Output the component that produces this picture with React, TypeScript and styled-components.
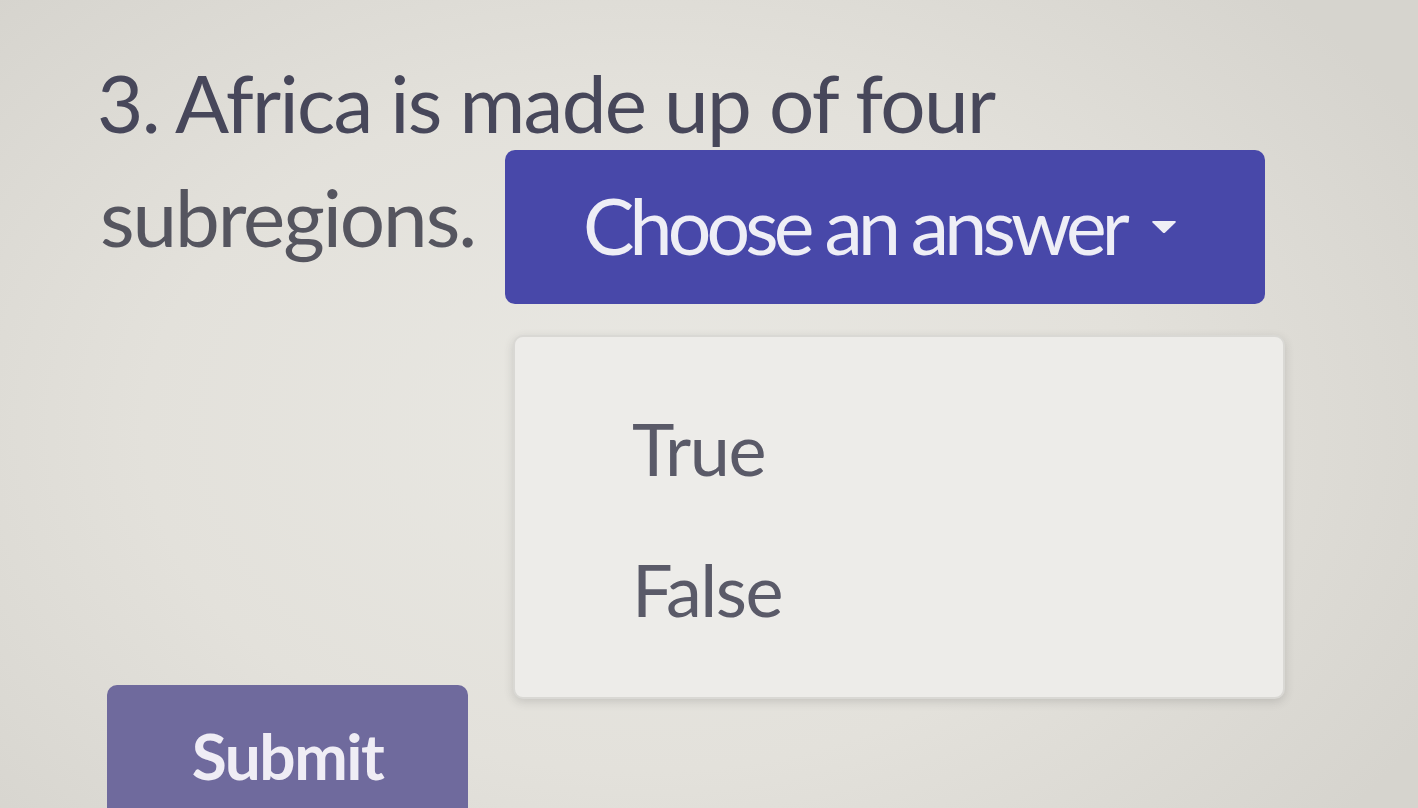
import React from "react";
import styled, { createGlobalStyle } from "styled-components";

const GlobalStyle = createGlobalStyle`
  html, body {
    margin: 0;
    padding: 0;
  }
  body {
    width: 1418px;
    height: 808px;
    overflow: hidden;
    background: radial-gradient(ellipse 900px 620px at 640px 430px, #e9e8e3 0%, #e3e1db 55%, #d6d4ce 100%);
    font-family: Lato, "Open Sans", sans-serif;
  }
`;

const Page = styled.main`
  display: flex;
  flex-direction: column;
  padding: 46px 0 0 97px;
  box-sizing: border-box;
  height: 808px;
`;

const QuestionLine = styled.div`
  font-size: 80px;
  line-height: 112px;
  color: #47475a;
  letter-spacing: -1.7px;
  white-space: nowrap;
`;

const AnswerRow = styled.div`
  display: flex;
  align-items: flex-start;
  gap: 30px;
`;

const QuestionTail = styled(QuestionLine)`
  margin-top: 2px;
  padding-left: 3px;
  color: #55555f;
  letter-spacing: -2.1px;
`;

const SelectWrap = styled.div`
  position: relative;
  margin-top: -8px;
`;

const SelectButton = styled.button`
  display: flex;
  align-items: center;
  gap: 26px;
  width: 760px;
  height: 154px;
  padding: 0 0 4px 78px;
  box-sizing: border-box;
  border: none;
  border-radius: 10px;
  background: #4848a9;
  color: #eeeef6;
  font-family: Lato, "Open Sans", sans-serif;
  font-size: 77px;
  letter-spacing: -4.85px;
  cursor: pointer;
`;

const Caret = styled.svg`
  width: 26px;
  height: 14px;
  margin-top: 4px;
`;

const Menu = styled.ul`
  position: absolute;
  top: 185px;
  left: 8px;
  width: 772px;
  height: 364px;
  margin: 0;
  padding: 41px 0;
  box-sizing: border-box;
  list-style: none;
  background: #edece9;
  border: 2px solid #d9d8d4;
  border-radius: 10px;
  box-shadow: 0 3px 10px rgba(60, 60, 60, 0.18);
`;

const MenuItem = styled.li`
  padding-left: 117px;
  font-size: 72px;
  line-height: 141px;
  color: #5a5a68;
  letter-spacing: -1.5px;
`;

const SubmitButton = styled.button`
  align-self: flex-start;
  flex-shrink: 0;
  margin: 381px 0 0 10px;
  width: 361px;
  height: 170px;
  padding: 0 0 30px;
  border: none;
  border-radius: 10px;
  background: #6f6a9d;
  color: #efedf5;
  font-family: Lato, "Open Sans", sans-serif;
  font-size: 64px;
  font-weight: 700;
  letter-spacing: -1.5px;
  cursor: pointer;
`;

export default function App() {
  return (
    <>
      <GlobalStyle />
      <Page>
        <QuestionLine>3. Africa is made up of four</QuestionLine>
        <AnswerRow>
          <QuestionTail>subregions.</QuestionTail>
          <SelectWrap>
            <SelectButton>
              Choose an answer
              <Caret viewBox="0 0 26 14">
                <path d="M2 1 L24 1 Q25.5 1 24.5 2.5 L14.2 12.6 Q13 13.6 11.8 12.6 L1.5 2.5 Q0.5 1 2 1 Z" fill="#eeeef6" />
              </Caret>
            </SelectButton>
            <Menu>
              <MenuItem>True</MenuItem>
              <MenuItem>False</MenuItem>
            </Menu>
          </SelectWrap>
        </AnswerRow>
        <SubmitButton>Submit</SubmitButton>
      </Page>
    </>
  );
}
